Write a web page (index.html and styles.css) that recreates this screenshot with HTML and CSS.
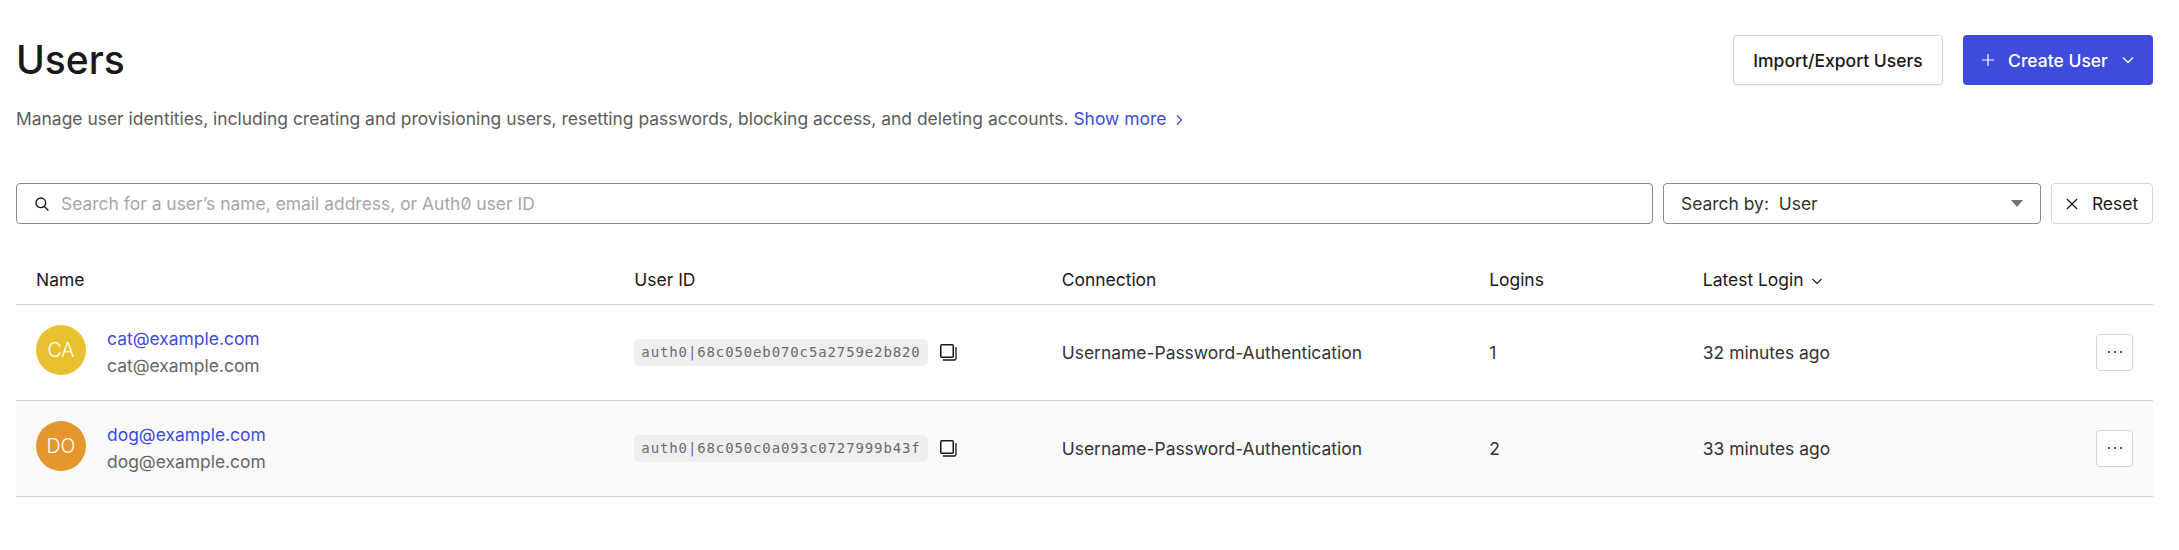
FILE: index.html
```html
<!DOCTYPE html>
<html lang="en">
<head>
    <meta charset="UTF-8">
    <meta name="viewport" content="width=device-width, initial-scale=1.0">
    <title>Users</title>
    <link rel="stylesheet" href="styles.css">
</head>
<body>
    <div class="page-head">
        <h1>Users</h1>
        <div class="head-actions">
            <button class="btn btn-outline" type="button">Import/Export Users</button>
            <button class="btn btn-primary" type="button">
                <svg class="icon-plus" viewBox="0 0 14 14" width="14" height="14"><path d="M7 1v12M1 7h12" fill="none" stroke="#fff" stroke-width="1.2"/></svg>
                <span>Create User</span>
                <svg class="icon-chevron" viewBox="0 0 14 14" width="14" height="14"><path d="M2 4.5l5 5 5-5" fill="none" stroke="#fff" stroke-width="1.3"/></svg>
            </button>
        </div>
    </div>
    <p class="intro">Manage user identities, including creating and provisioning users, resetting passwords, blocking access, and deleting accounts. <a href="#" class="more">Show more<svg viewBox="0 0 10 12" width="10" height="12"><path d="M3 1.5L7.5 6 3 10.5" fill="none" stroke="#3f4bdb" stroke-width="1.3"/></svg></a></p>

    <div class="filters">
        <label class="search-box">
            <svg viewBox="0 0 16 16" width="16" height="16"><circle cx="6.8" cy="6.8" r="4.8" fill="none" stroke="#191919" stroke-width="1.4"/><path d="M10.4 10.4l4 4" stroke="#191919" stroke-width="1.4"/></svg>
            <input type="text" placeholder="Search for a user’s name, email address, or Auth0 user ID">
        </label>
        <div class="search-by">
            <span>Search by:&nbsp; User</span>
            <i class="caret"></i>
        </div>
        <button class="btn-reset" type="button">
            <svg viewBox="0 0 12 12" width="12" height="12"><path d="M1 1l10 10M11 1L1 11" fill="none" stroke="#191919" stroke-width="1.2"/></svg>
            Reset
        </button>
    </div>

    <table class="users">
        <thead>
            <tr>
                <th class="col-name">Name</th>
                <th class="col-id">User ID</th>
                <th class="col-conn">Connection</th>
                <th class="col-logins">Logins</th>
                <th>Latest Login<svg class="sort" viewBox="0 0 12 10" width="12" height="10"><path d="M1.5 3L6 7.5 10.5 3" fill="none" stroke="#191919" stroke-width="1.1"/></svg></th>
            </tr>
        </thead>
        <tbody>
            <tr>
                <td>
                    <div class="who">
                        <div class="avatar avatar-ca">CA</div>
                        <div>
                            <a href="#" class="who-link">cat@example.com</a>
                            <div class="who-mail">cat@example.com</div>
                        </div>
                    </div>
                </td>
                <td>
                    <div class="id-cell">
                        <code>auth0|68c050eb070c5a2759e2b820</code>
                        <svg viewBox="0 0 17 17" width="17" height="17"><rect x="0.75" y="0.75" width="12.5" height="12.5" rx="1" fill="none" stroke="#191919" stroke-width="1.5"/><path d="M16 3v11.5a1.5 1.5 0 0 1-1.5 1.5H3" fill="none" stroke="#191919" stroke-width="1.3"/></svg>
                    </div>
                </td>
                <td>Username-Password-Authentication</td>
                <td>1</td>
                <td>
                    <div class="last-cell">
                        <span>32 minutes ago</span>
                        <button class="btn-dots" type="button"><svg viewBox="0 0 16 4" width="16" height="4"><circle cx="2" cy="2" r="1" fill="#191919"/><circle cx="8" cy="2" r="1" fill="#191919"/><circle cx="14" cy="2" r="1" fill="#191919"/></svg></button>
                    </div>
                </td>
            </tr>
            <tr class="shaded">
                <td>
                    <div class="who">
                        <div class="avatar avatar-do">DO</div>
                        <div>
                            <a href="#" class="who-link">dog@example.com</a>
                            <div class="who-mail">dog@example.com</div>
                        </div>
                    </div>
                </td>
                <td>
                    <div class="id-cell">
                        <code>auth0|68c050c0a093c0727999b43f</code>
                        <svg viewBox="0 0 17 17" width="17" height="17"><rect x="0.75" y="0.75" width="12.5" height="12.5" rx="1" fill="none" stroke="#191919" stroke-width="1.5"/><path d="M16 3v11.5a1.5 1.5 0 0 1-1.5 1.5H3" fill="none" stroke="#191919" stroke-width="1.3"/></svg>
                    </div>
                </td>
                <td>Username-Password-Authentication</td>
                <td>2</td>
                <td>
                    <div class="last-cell">
                        <span>33 minutes ago</span>
                        <button class="btn-dots" type="button"><svg viewBox="0 0 16 4" width="16" height="4"><circle cx="2" cy="2" r="1" fill="#191919"/><circle cx="8" cy="2" r="1" fill="#191919"/><circle cx="14" cy="2" r="1" fill="#191919"/></svg></button>
                    </div>
                </td>
            </tr>
        </tbody>
    </table>
</body>
</html>
```

FILE: styles.css
```css
body{
    margin: 0;
    padding: 35px 26px 0 16px;
    font-family: Inter, "Liberation Sans", sans-serif;
    font-size: 17.45px;
    color: #191919;
    background-color: #ffffff;
}
/* cabecera */
.page-head{
    display: flex;
    justify-content: space-between;
    align-items: center;
    height: 50px;
}
h1{
    margin: 0;
    font-size: 39px;
    font-weight: 500;
    line-height: 50px;
    color: #191919;
}
.head-actions{
    display: flex;
    gap: 20px;
}
.btn{
    height: 50px;
    border-radius: 4px;
    font-family: inherit;
    font-size: 17.5px;
    font-weight: 500;
}
.btn-outline{
    width: 210px;
    background-color: #ffffff;
    border: 1px solid #d5d5d5;
    color: #191919;
    box-shadow: 0 1px 2px #00000010;
}
.btn-primary{
    display: flex;
    align-items: center;
    justify-content: center;
    width: 190px;
    padding: 0;
    background-color: #3f4bdb;
    border: none;
    color: #ffffff;
}
.icon-plus{
    margin-right: 13px;
}
.icon-chevron{
    margin-left: 13px;
}
.intro{
    margin: 21px 0 0;
    line-height: 26px;
    color: #5c5c5c;
}
.more{
    color: #3f4bdb;
    text-decoration: none;
}
.more svg{
    margin-left: 8px;
    vertical-align: -1px;
}
/* filtros */
.filters{
    display: flex;
    gap: 10px;
    margin-top: 51px;
    height: 41px;
}
.search-box{
    flex: 1;
    display: flex;
    align-items: center;
    gap: 11px;
    padding: 0 17px;
    border: 1px solid #8a8a8a;
    border-radius: 4px;
}
.search-box input{
    flex: 1;
    border: none;
    outline: none;
    padding: 0;
    font-family: inherit;
    font-size: 17.45px;
    font-feature-settings: "zero";
    color: #191919;
}
.search-box input::placeholder{
    color: #a6a6a6;
}
.search-by{
    display: flex;
    align-items: center;
    justify-content: space-between;
    width: 378px;
    box-sizing: border-box;
    padding: 0 17px;
    border: 1px solid #8a8a8a;
    border-radius: 4px;
    color: #333333;
}
.caret{
    width: 0;
    height: 0;
    border-left: 6.5px solid transparent;
    border-right: 6.5px solid transparent;
    border-top: 7px solid #757575;
}
.btn-reset{
    display: flex;
    align-items: center;
    justify-content: center;
    gap: 14px;
    width: 102px;
    padding: 0;
    background-color: #ffffff;
    border: 1px solid #d5d5d5;
    border-radius: 4px;
    font-family: inherit;
    font-size: 17.45px;
    color: #191919;
}
/* tabla */
.users{
    width: 100%;
    margin-top: 32px;
    border-collapse: collapse;
    table-layout: fixed;
}
.users th{
    box-sizing: border-box;
    height: 48px;
    padding: 0 0 0 20px;
    text-align: left;
    font-weight: 400;
    color: #191919;
    border-bottom: 1px solid #d0d0d0;
}
.sort{
    margin-left: 7px;
}
.users td{
    box-sizing: border-box;
    height: 96px;
    padding: 0 0 0 20px;
    border-bottom: 1px solid #d0d0d0;
    color: #333333;
}
.col-name{
    width: 28%;
}
.col-id,
.col-conn{
    width: 20%;
}
.col-logins{
    width: 10%;
}
.shaded{
    background-color: #fafafa;
}
.who{
    display: flex;
    align-items: flex-start;
    gap: 21px;
}
.avatar{
    display: flex;
    align-items: center;
    justify-content: center;
    width: 50px;
    height: 50px;
    border-radius: 50%;
    font-size: 19.5px;
    font-weight: 300;
    color: #ffffff;
}
.avatar-ca{
    background-color: #e9c02f;
}
.avatar-do{
    background-color: #e5962e;
}
.who-link{
    display: block;
    line-height: 27px;
    color: #3f4bdb;
    text-decoration: none;
}
.who-mail{
    line-height: 27px;
    color: #666666;
}
.id-cell{
    display: flex;
    align-items: center;
    gap: 12px;
}
code{
    padding: 0 7px;
    line-height: 27px;
    background-color: #efefef;
    border-radius: 5px;
    font-family: "DejaVu Sans Mono", "Liberation Mono", monospace;
    font-size: 14px;
    letter-spacing: 0.88px;
    color: #6b6b6b;
    white-space: nowrap;
}
.last-cell{
    display: flex;
    align-items: center;
    justify-content: space-between;
    padding-right: 20px;
}
.btn-dots{
    display: flex;
    align-items: center;
    justify-content: center;
    width: 37px;
    height: 37px;
    padding: 0;
    background-color: #ffffff;
    border: 1px solid #d5d5d5;
    border-radius: 4px;
}
```
